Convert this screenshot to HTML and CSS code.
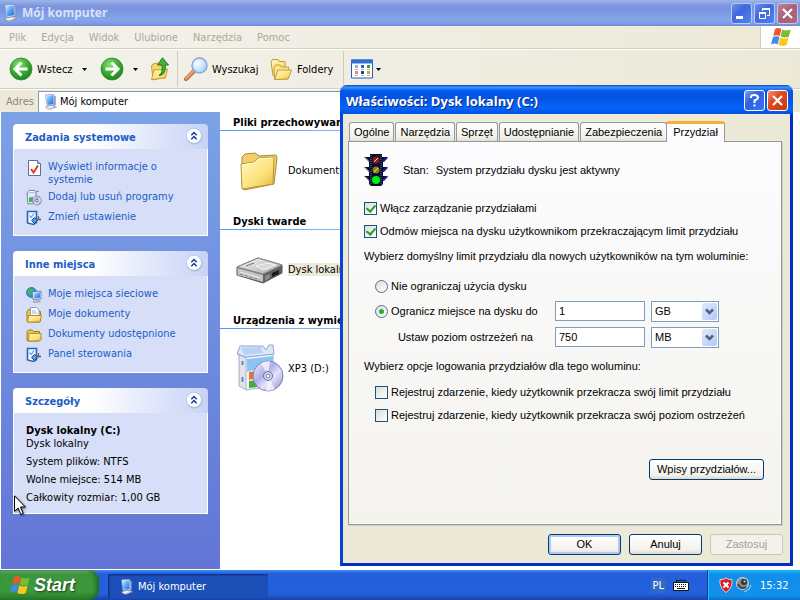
FILE: index.html
```html
<!DOCTYPE html>
<html lang="pl">
<head>
<meta charset="utf-8">
<title>Mój komputer</title>
<link rel="stylesheet" href="styles.css">
</head>
<body>
<svg class="defs" aria-hidden="true">
  <defs>
    <linearGradient id="g-screen" x1="0" y1="0" x2="1" y2="1"><stop offset="0" stop-color="#d4eeff"/><stop offset=".5" stop-color="#5aa6f4"/><stop offset="1" stop-color="#2468d4"/></linearGradient>
    <radialGradient id="g-green" cx=".4" cy=".3" r=".75"><stop offset="0" stop-color="#8ee070"/><stop offset=".5" stop-color="#3fae34"/><stop offset="1" stop-color="#1c7d1c"/></radialGradient>
    <linearGradient id="g-folder" x1="0" y1="0" x2="1" y2="1"><stop offset="0" stop-color="#fffbc0"/><stop offset=".6" stop-color="#fbe27a"/><stop offset="1" stop-color="#e8b93c"/></linearGradient>
    <linearGradient id="g-disc" x1="0" y1="0" x2="1" y2="1"><stop offset="0" stop-color="#f4f4ff"/><stop offset=".4" stop-color="#b0b0ea"/><stop offset=".6" stop-color="#e6e2fc"/><stop offset="1" stop-color="#8c88d0"/></linearGradient>
    <linearGradient id="g-metal" x1="0" y1="0" x2="1" y2="1"><stop offset="0" stop-color="#f8f8f8"/><stop offset="1" stop-color="#a8a8a8"/></linearGradient>
    <radialGradient id="g-lens" cx=".35" cy=".35" r=".7"><stop offset="0" stop-color="#fff"/><stop offset="1" stop-color="#a4d2f8"/></radialGradient>
    <symbol id="computer" viewBox="0 0 16 16">
      <path d="M3 12.500 11 11l2.500 2-7 2.500L3 14z" fill="#d8d6e4" stroke="#8886a8" stroke-width=".6"/>
      <path d="M10.500 1.500 12.500 2.500v8l-1.500 1z" fill="#a8b4d4" stroke="#6d7da6" stroke-width=".5"/>
      <path d="M2.500 1Q6.500 0 10.800.5l.7 10Q8 12 4 11.500z" fill="#e4edfb" stroke="#6d8bc4" stroke-width=".6"/>
      <path d="M3.300 2Q7 .8 10.200 1.500l.5 8.300Q7.500 11 4.500 10.500z" fill="url(#g-screen)"/>
      <path d="M4 13.500l5-1" stroke="#fff"/><path d="M11 13.300h1" stroke="#d44"/>
    </symbol>
    <symbol id="flag" viewBox="0 0 20 20">
      <path d="M4 2Q7 0 10.500 2L8.700 9Q5.500 7.500 2.300 9z" fill="#f0562c"/>
      <path d="M11.300 2.500Q15 4.500 19.700 2.500L17.800 9.800Q13.500 11.300 9.500 9.500z" fill="#7cbc30"/>
      <path d="M2 10Q5.500 8.500 8.500 10L6.600 17.500Q4 15.500 0 17.500z" fill="#3f8be6"/>
      <path d="M9.200 10.500Q13 12.500 17.500 10.800L15.700 18Q12 20 7.400 18z" fill="#fcc820"/>
    </symbol>
    <symbol id="collapse" viewBox="0 0 18 18">
      <circle cx="9.500" cy="9.700" r="8" fill="#98a8cc" opacity=".6"/>
      <circle cx="9" cy="8.700" r="7.500" fill="#fff" stroke="#b4c2e4" stroke-width=".8"/>
      <path d="M6.300 8.200 9 5.500l2.700 2.700M6.300 12.200 9 9.500l2.700 2.700" fill="none" stroke="#123a90" stroke-width="1.500"/>
    </symbol>
    <symbol id="panel" viewBox="0 0 16 16">
      <path d="M1.500 1.500h9v11l-3 2-6-1.500z" fill="#eef6ff" stroke="#2a66b4" stroke-width="1.600"/>
      <path d="M3.500 5.500 5 7.500l3-4" fill="none" stroke="#6b9ade" stroke-width="1.200"/>
      <path d="M5.500 10.500 8.500 7.500l3 2.500-3 3.500z" fill="#5b9ae4" stroke="#1e4c94"/>
      <path d="M11 9.500h4" stroke="#8a5f50" stroke-width="1.800"/>
      <path d="M12.500 6v4" stroke="#47669a" stroke-width="1.200"/>
    </symbol>
    <symbol id="folder" viewBox="0 0 16 16">
      <path d="M1 4.500 2.500 3H6l1.500 1.500h6V13l-1 1h-11L1 13z" fill="#f1c445" stroke="#a8781c"/>
      <path d="M3 6.500h12v6L13.500 14h-11z" fill="url(#g-folder)" stroke="#b98a24"/>
    </symbol>
  </defs>
</svg>

<main class="explorer">
  <header class="titlebar">
    <svg class="icon18"><use href="#computer"/></svg>
    <h1>Mój komputer</h1>
    <div class="winbuttons">
      <button class="winbtn" aria-label="Minimalizuj"><svg viewBox="0 0 19 19"><path d="M4 13.500h7" stroke="#fff" stroke-width="3"/></svg></button>
      <button class="winbtn" aria-label="Przywróć"><svg viewBox="0 0 19 19" fill="none" stroke="#fff"><path d="M7.500 7V5.500h7v6H12"/><path d="M7 5h8" stroke-width="2"/><path d="M4.500 9.500h6v5h-6z"/><path d="M4 9h7" stroke-width="2"/></svg></button>
      <button class="winbtn close" aria-label="Zamknij"><svg viewBox="0 0 19 19"><path d="m5 5 9 9m0-9-9 9" stroke="#fff" stroke-width="2.200"/></svg></button>
    </div>
  </header>

  <nav class="menubar">
    <button>Plik</button><button>Edycja</button><button>Widok</button><button>Ulubione</button><button>Narzędzia</button><button>Pomoc</button>
    <div class="brand"><svg class="icon20"><use href="#flag"/></svg></div>
  </nav>

  <div class="toolbar">
    <button class="tool back"><svg class="icon24" viewBox="0 0 24 24"><circle cx="12" cy="12" r="11" fill="url(#g-green)" stroke="#2c8a2a" stroke-width=".8"/><path d="M12.500 5.500 6 12l6.500 6.500M6.500 12H18.500" fill="none" stroke="#fff" stroke-width="3"/></svg>Wstecz</button>
    <button class="drop" aria-label="Historia wstecz"><svg viewBox="0 0 5 3"><path d="M0 0h5L2.500 3z"/></svg></button>
    <button class="tool forward" aria-label="Dalej"><svg class="icon24" viewBox="0 0 24 24"><circle cx="12" cy="12" r="11" fill="url(#g-green)" stroke="#2c8a2a" stroke-width=".8"/><path d="M11.500 5.500 18 12l-6.500 6.500M17.500 12H5.500" fill="none" stroke="#fff" stroke-width="3"/></svg></button>
    <button class="drop" aria-label="Historia dalej"><svg viewBox="0 0 5 3"><path d="M0 0h5L2.500 3z"/></svg></button>
    <button class="tool up" aria-label="W górę"><svg class="icon24" viewBox="0 0 24 24"><path d="M3.500 9 5 7l5-1 1.500 2 6 .5v11L5 23z" fill="#f7d661" stroke="#c39a3a"/><path d="M3.500 22.500 6 13l13.500-1-2 9z" fill="url(#g-folder)" stroke="#c39a3a"/><path d="M11 18.500q4-2 3-10.500H9.500L14.500.8 20.500 8H17q1.500 10-6 10.500z" fill="#41b23a" stroke="#1c7a1c"/></svg></button>
    <span class="sep"></span>
    <button class="tool search"><svg class="icon24" viewBox="0 0 24 24"><path d="M2 22l9-9" stroke="#a8654c" stroke-width="4" stroke-linecap="round"/><path d="M2 21.500l8-8" stroke="#f59a60" stroke-width="2.500" stroke-linecap="round"/><circle cx="15.500" cy="8.500" r="7.500" fill="url(#g-lens)" stroke="#8aa6d8" stroke-width="1.500"/></svg>Wyszukaj</button>
    <button class="tool folders"><svg class="icon24" viewBox="0 0 24 24"><path d="M2 5l1.500-2.500H9l1 2h6v13L4 18.500z" fill="url(#g-folder)" stroke="#c19a3c"/><path d="M5 10.500 6.500 8H11l1.500 2h7V21l-1 1H5.500z" fill="#fae68c" stroke="#c19a3c"/><path d="M5.500 22.500 9 13h13.500L19 22z" fill="url(#g-folder)" stroke="#c19a3c"/></svg>Foldery</button>
    <span class="sep"></span>
    <button class="tool views" aria-label="Widoki"><svg class="icon24" viewBox="0 0 24 24"><path d="M1.500 3h21v18h-21z" fill="#fff" stroke="#2a5cb8"/><path d="M1 4.500h22" stroke="#2f6fd6" stroke-width="4"/><g stroke-width="3"><path d="M5 9.500h3" stroke="#8eb0e4"/><path d="M11 9.500h3" stroke="#2b5fd0"/><path d="M17 9.500h3" stroke="#2e9a38"/><path d="M5 15.500h3" stroke="#ee8664"/><path d="M11 15.500h3" stroke="#203c90"/><path d="M17 15.500h3" stroke="#d8a428"/></g><path d="M5 12.500h3m3 0h3m3 0h3M5 18.500h3m3 0h3m3 0h3" stroke="#a8b4c8"/></svg></button>
    <button class="drop" aria-label="Wybierz widok"><svg viewBox="0 0 5 3"><path d="M0 0h5L2.500 3z"/></svg></button>
  </div>

  <div class="addressbar">
    <label for="address">Adres</label>
    <div class="field"><svg class="icon16"><use href="#computer"/></svg><input id="address" type="text" value="Mój komputer"></div>
  </div>

  <div class="content">
    <aside class="sidebar">
      <section class="card">
        <header><h2>Zadania systemowe</h2><button aria-label="Zwiń"><svg><use href="#collapse"/></svg></button></header>
        <ul>
          <li><svg class="icon16" viewBox="0 0 16 16"><path d="M2.500.5h9l3 3v12h-12z" fill="#fff" stroke="#55719e"/><path d="M11.500.5v3h3" fill="#c8dcf6" stroke="#55719e"/><path d="M5 9l2.500 3.500L12 5.500" fill="none" stroke="#e83a20" stroke-width="2"/></svg><a href="#">Wyświetl informacje o systemie</a></li>
          <li><svg class="icon16" viewBox="0 0 16 16"><path d="M1 3l9-1.500v12L2 14z" fill="#dfeaf8" stroke="#7089b4"/><path d="M1 3 3 .5h6l1 1.500 3-1" fill="#fff" stroke="#7089b4"/><path d="M3 7.500 7 7v5H3z" fill="#4eb04c"/><circle cx="11" cy="10.500" r="4.500" fill="url(#g-disc)" stroke="#7a7a9c" stroke-width=".7"/><circle cx="11" cy="10.500" r="1.300" fill="#fff" stroke="#667"/></svg><a href="#">Dodaj lub usuń programy</a></li>
          <li><svg class="icon16"><use href="#panel"/></svg><a href="#">Zmień ustawienie</a></li>
        </ul>
      </section>
      <section class="card">
        <header><h2>Inne miejsca</h2><button aria-label="Zwiń"><svg><use href="#collapse"/></svg></button></header>
        <ul>
          <li><svg class="icon16" viewBox="0 0 16 16"><circle cx="5.500" cy="5.500" r="5" fill="#3b8de2" stroke="#1f5fb0" stroke-width=".7"/><path d="M2 3q3-3 5 0T3 8q-2-2-1-5z" fill="#4cb848"/><path d="M6 5l9-1v8l-8 .5z" fill="#dfe9f8" stroke="#54709e" stroke-width=".8"/><path d="M7.500 6 14 5.300v5.500l-6 .5z" fill="url(#g-screen)"/><path d="M7 14.500l6-1 1.500 1-5 1.500z" fill="#ccc9d8" stroke="#777" stroke-width=".5"/></svg><a href="#">Moje miejsca sieciowe</a></li>
          <li><svg class="icon16" viewBox="0 0 16 16"><path d="M1 4.500 2.500 2.500H6l8.500 2V14l-1 1h-12L1 14z" fill="#f1c445" stroke="#a8781c"/><path d="M4.500.5h6l2.500 2.500v9h-8.500z" fill="#fff" stroke="#8ca0c4"/><path d="M6 4h4m-4 2h5" stroke="#8bb0e8"/><path d="M2.500 8.500h13L14 15H1.500z" fill="url(#g-folder)" stroke="#b98a24"/></svg><a href="#">Moje dokumenty</a></li>
          <li><svg class="icon16"><use href="#folder"/></svg><a href="#">Dokumenty udostępnione</a></li>
          <li><svg class="icon16"><use href="#panel"/></svg><a href="#">Panel sterowania</a></li>
        </ul>
      </section>
      <section class="card">
        <header><h2>Szczegóły</h2><button aria-label="Zwiń"><svg><use href="#collapse"/></svg></button></header>
        <div class="details">
          <strong>Dysk lokalny (C:)</strong>
          <p>Dysk lokalny</p>
          <p>System plików: NTFS</p>
          <p>Wolne miejsce: 514 MB</p>
          <p>Całkowity rozmiar: 1,00 GB</p>
        </div>
      </section>
    </aside>

    <div class="files">
      <section>
        <h3>Pliki przechowywane</h3>
        <div class="file"><svg class="icon48" viewBox="0 0 48 48"><path d="M6 40V11l3-3 10-1 4 3 17-1 1 3-3 26-30 6z" fill="#f3d066" stroke="#a88a3c"/><path d="M5 18l13-2 4-4 16-1-1 27-31 5z" fill="url(#g-folder)" stroke="#b8983c"/><path d="M6.500 19 18.500 17l4-4 14-1" fill="none" stroke="#fffde0"/></svg><span>Dokumenty</span></div>
      </section>
      <section>
        <h3>Dyski twarde</h3>
        <div class="file selected"><svg class="icon48" viewBox="0 0 48 48"><path d="M1 22 22 13l24 7v8L27 38 1 30z" fill="#606060" stroke="#555"/><path d="M1 22 22 13l24 7-19 9z" fill="url(#g-metal)" stroke="#888"/><path d="M1.500 23 27 30v7L1.500 30z" fill="#c4c4c4"/><path d="M4 27l20 6" stroke="#eee"/><path d="M4 29l20 6" stroke="#808080" stroke-dasharray="3 2"/><path d="M20 21l12-3 8 2-13 5z" fill="#d8d8d8" stroke="#f6f6f6"/><path d="M36 28l7-3v4l-7 3z" fill="#1c1c1c"/><path d="M29 31l5-2v4l-5 3z" fill="#8c8c8c"/><path d="M10 21l8-3" stroke="#777"/></svg><span>Dysk lokalny</span></div>
      </section>
      <section>
        <h3>Urządzenia z wymiennym</h3>
        <div class="file"><svg class="icon48" viewBox="0 0 48 48"><path d="M3 11l8 3v32l-8-4z" fill="#e2e4ea" stroke="#a4acbc"/><path d="M10 13l27-3v32L10 46z" fill="#f0f7ff" stroke="#a4b6d2"/><path d="M1 10 4 2h23l3 4 3-5h4l1 9-28 3z" fill="#dbe8fa" stroke="#8ca8d6"/><path d="M5 4l20-1 2 6-19 2z" fill="#b9d2f4"/><path d="M11 15l26-3v8l-26 8z" fill="#8cc4f5"/><path d="M13 28l8-1v7l-8 2z" fill="#f07030"/><path d="M22 27l8-1v7l-8 1z" fill="#63b847"/><path d="M13 37l8-1v7l-8 1z" fill="#3fae34"/><path d="M6.500 17v4m0 12v5" stroke="#5b87cc" stroke-width="2"/><circle cx="32" cy="32" r="15" fill="url(#g-disc)" stroke="#7f7fb4"/><path d="M32 32 25 19a15 15 0 0 1 9-2zM32 32l7 13a15 15 0 0 1-9 2z" fill="#fff" opacity=".65"/><circle cx="32" cy="32" r="4.500" fill="#d8d8ee" stroke="#6668b0"/><circle cx="32" cy="32" r="2" fill="#fff" stroke="#7880a0"/></svg><span>XP3 (D:)</span></div>
      </section>
    </div>
  </div>
</main>

<footer class="taskbar">
  <button class="start"><svg class="icon20"><use href="#flag"/></svg>Start</button>
  <button class="task"><svg class="icon16"><use href="#computer"/></svg>Mój komputer</button>
  <div class="lang"><span>PL</span><svg class="icon16" viewBox="0 0 16 16"><path d="M3.500 5V3l2 1 2-1 2 1 2-1 2 1" fill="none" stroke="#111"/><path d="M.5 5.500h15v8H.5z" fill="#fff" stroke="#111"/><path d="M2 7.500h12M2 9.500h12" stroke="#111" stroke-dasharray="1 1"/><path d="M4 11.500h8" stroke="#111"/></svg></div>
  <div class="tray">
    <svg class="icon16" viewBox="0 0 16 16"><path d="M8 1q3 2 6 1.500 1 8-6 13Q1 10.500 2 2.500 5 3 8 1z" fill="#d81e24" stroke="#f4c4c4"/><path d="M5.500 5.500l5 5m0-5-5 5" stroke="#fff" stroke-width="2"/></svg>
    <svg class="icon16" viewBox="0 0 16 16"><circle cx="6.500" cy="6.500" r="6" fill="#8c8c90" stroke="#dcdce4"/><path d="M2 7a5 5 0 0 0 8 3" fill="none" stroke="#444" stroke-width="2"/><circle cx="8" cy="5" r="3" fill="#333"/><circle cx="8.500" cy="4.500" r="1" fill="#ddd"/><path d="M10 14q4-1 5-6M8 15l2-1" fill="none" stroke="#b0d8ff"/></svg>
    <time>15:32</time>
  </div>
</footer>

<div class="dialog" role="dialog" aria-labelledby="dialog-title">
  <header class="dialog-title">
    <h2 id="dialog-title">Właściwości: Dysk lokalny (C:)</h2>
    <button class="winbtn" aria-label="Pomoc"><svg viewBox="0 0 19 19"><path d="M6 7V5.500Q6.500 4 9.500 4q3.500 0 3.500 2.500Q13 8 9.500 9.500V12" fill="none" stroke="#fff" stroke-width="2"/><path d="M8.500 14.500h2" stroke="#fff" stroke-width="2"/></svg></button>
    <button class="winbtn close" aria-label="Zamknij"><svg viewBox="0 0 19 19"><path d="m5 5 9 9m0-9-9 9" stroke="#fff" stroke-width="2.200"/></svg></button>
  </header>
  <form class="dialog-body" onsubmit="return false">
    <div class="tabs" role="tablist">
      <button role="tab">Ogólne</button><button role="tab">Narzędzia</button><button role="tab">Sprzęt</button><button role="tab">Udostępnianie</button><button role="tab">Zabezpieczenia</button><button role="tab" class="active" aria-selected="true">Przydział</button>
    </div>
    <div class="pane">
      <div class="status">
        <svg class="traffic" viewBox="0 0 24 32"><path d="M0 3h6V0h12v3h6l-5 5v5h5l-5 5v4h5l-5 5v3l-2 2H7l-2-2v-3l-5-5h5v-4l-5-5h5V8z" fill="#0a0a30"/><path d="M1 3.500l4 4M1 13.500l4 4M1 22.500l4 4" stroke="#e8e060"/><path d="M23 3.500l-4 4m4 6-4 4m4 5-4 4" stroke="#22228c" stroke-width="2"/><path d="M7 1v30M17 1v30" stroke="#2a8c8c" stroke-dasharray="1 1"/><circle cx="12" cy="6" r="3.500" fill="#901818"/><circle cx="12" cy="16" r="3.500" fill="#8c8410"/><path d="m10 8 4-4m-4 14 4-4" stroke="#e8d8c0"/><circle cx="12" cy="26" r="4" fill="#00f010"/></svg>
        <span>Stan:</span><span>System przydziału dysku jest aktywny</span>
      </div>
      <div class="group">
        <label class="check"><input type="checkbox" checked>Włącz zarządzanie przydziałami</label>
        <label class="check"><input type="checkbox" checked>Odmów miejsca na dysku użytkownikom przekraczającym limit przydziału</label>
      </div>
      <p class="note">Wybierz domyślny limit przydziału dla nowych użytkowników na tym woluminie:</p>
      <div class="limits">
        <label class="check wide"><input type="radio" name="limit">Nie ograniczaj użycia dysku</label>
        <label class="check"><input type="radio" name="limit" checked>Ogranicz miejsce na dysku do</label>
        <input type="text" value="1" aria-label="Limit miejsca">
        <div class="combo"><select aria-label="Jednostka limitu"><option>GB</option></select><svg viewBox="0 0 15 17"><path d="m4 6.500 3.500 3.500L11 6.500" fill="none" stroke="#4d6185" stroke-width="2.500"/></svg></div>
        <label class="right" for="warn">Ustaw poziom ostrzeżeń na</label>
        <input id="warn" type="text" value="750">
        <div class="combo"><select aria-label="Jednostka ostrzeżenia"><option>MB</option></select><svg viewBox="0 0 15 17"><path d="m4 6.500 3.500 3.500L11 6.500" fill="none" stroke="#4d6185" stroke-width="2.500"/></svg></div>
      </div>
      <p class="note">Wybierz opcje logowania przydziałów dla tego woluminu:</p>
      <div class="group indent">
        <label class="check"><input type="checkbox">Rejestruj zdarzenie, kiedy użytkownik przekracza swój limit przydziału</label>
        <label class="check"><input type="checkbox">Rejestruj zdarzenie, kiedy użytkownik przekracza swój poziom ostrzeżeń</label>
      </div>
      <button class="push entries">Wpisy przydziałów...</button>
    </div>
    <div class="actions">
      <button class="push default">OK</button>
      <button class="push">Anuluj</button>
      <button class="push" disabled>Zastosuj</button>
    </div>
  </form>
</div>

<svg class="cursor" viewBox="0 0 13 21" aria-hidden="true"><path d="M.5.800v15.500l3.600-3.300 2.700 6.500 2.400-1L6.500 12h4.800z" fill="#fff" stroke="#000"/></svg>
</body>
</html>
```
FILE: styles.css
```css
* { box-sizing: border-box; }

body {
  margin: 0;
  min-height: 100vh;
  display: flex;
  flex-direction: column;
  overflow: hidden;
  position: relative;
  font: 11px/13px "DejaVu Sans Condensed", "DejaVu Sans", sans-serif;
  color: #000;
  background: #fff;
}

h1, h2, h3, p, ul { margin: 0; padding: 0; }
button, input, select { font: inherit; color: inherit; margin: 0; }
button { border: 0; padding: 0; background: none; }
svg { display: block; flex: none; }
.defs { position: absolute; width: 0; height: 0; }

.icon16 { width: 16px; height: 16px; }
.icon18 { width: 18px; height: 18px; }
.icon20 { width: 20px; height: 20px; }
.icon24 { width: 24px; height: 24px; }
.icon48 { width: 48px; height: 48px; }

/* Explorer window */
.explorer { flex: 1; display: flex; flex-direction: column; background: #ece9d8; }

.titlebar {
  height: 26px;
  display: flex;
  align-items: center;
  gap: 2px;
  padding: 0 2px;
  background: linear-gradient(#9db5ea 0, #7a93de 25%, #7c97e2 45%, #83a7e9 75%, #7f9be4 90%, #7288d6 100%);
}
.titlebar h1 { font: bold 12px/16px "Open Sans", sans-serif; color: #d8e4f8; }
.winbuttons { margin-left: auto; display: flex; gap: 2px; }
.winbtn {
  width: 21px;
  height: 21px;
  border: 1px solid #fff;
  border-radius: 3px;
  background: linear-gradient(135deg, #7f9ff4, #2f60e0 40%, #3c74ee);
}
.winbtn.close { background: linear-gradient(135deg, #f0967c, #e04820 40%, #c83a12); }
.titlebar .winbtn { border-color: #bccaf2; background: linear-gradient(135deg, #6f8fe8, #4068dc 40%, #4e86f0); }
.titlebar .winbtn.close { background: linear-gradient(135deg, #c08498, #ac5c78 50%, #b4687c); }

.menubar {
  height: 23px;
  display: flex;
  align-items: center;
  gap: 15px;
  padding-left: 9px;
  color: #aca899;
  background: linear-gradient(90deg, #f3f2ec, #ece9d8);
  border-bottom: 1px solid #d5cfb8;
}
.brand {
  align-self: stretch;
  width: 40px;
  margin-left: auto;
  display: grid;
  place-items: center;
  background: #fff;
  border-left: 1px solid #d5cfb8;
}

.toolbar {
  height: 40px;
  display: flex;
  align-items: center;
  padding-left: 9px;
  background: linear-gradient(90deg, #f3f2ec, #ece9d8);
  border-top: 1px solid #fff;
  border-bottom: 1px solid #d5cfb8;
}
.tool { display: flex; align-items: center; gap: 4px; }
.drop { width: 6px; }
.drop svg { width: 5px; height: 3px; }
.back { width: 73px; }
.forward { margin-left: 12px; width: 33px; }
.up { margin-left: 9px; width: 29px; }
.search { margin-left: 6px; width: 85px; }
.folders { width: 74px; }
.views { margin-left: 6px; width: 26px; }
.sep { width: 1px; height: 36px; background: #d0ccba; }

.addressbar {
  height: 23px;
  display: flex;
  align-items: center;
  padding: 1px 7px 0 6px;
  gap: 4px;
  color: #8c8a7c;
  border-top: 1px solid #fff;
}
.field {
  flex: 1;
  height: 22px;
  display: flex;
  align-items: center;
  padding-left: 4px;
  gap: 1px;
  background: #fff;
  border: 1px solid #7f9db9;
  color: #000;
}
.field input { flex: 1; border: 0; padding: 0; background: none; outline: 0; }

.content { flex: 1; display: flex; background: #fff; padding: 0 0 1px 1px; }

.sidebar {
  width: 219px;
  padding: 12px;
  display: flex;
  flex-direction: column;
  gap: 15px;
  background: linear-gradient(#7ba2e7, #6375d6);
}
.card header {
  height: 25px;
  display: flex;
  align-items: center;
  justify-content: space-between;
  padding: 0 5px 2px 12px;
  border-radius: 4px 4px 0 0;
  background: linear-gradient(90deg, #fff 40%, #c6d3f7);
}
.card h2 { padding-top: 4px; font: bold 11px/13px "DejaVu Sans Condensed", "DejaVu Sans", sans-serif; color: #215dc6; }
.card header svg { width: 18px; height: 18px; }
.card ul, .details { border: 1px solid #fff; border-top: 0; background: #d6dff7; }
.card ul {
  list-style: none;
  padding: 11px 30px 9px 12px;
  display: flex;
  flex-direction: column;
  gap: 4px;
}
.card li { display: flex; gap: 6px; min-height: 16px; }
.card a { color: #215dc6; text-decoration: none; }
.details { padding: 11px 12px 9px; display: flex; flex-direction: column; gap: 5px; }
.details strong { margin-bottom: -5px; }

.files { flex: 1; min-width: 0; }
.files h3 {
  height: 19px;
  padding: 4px 0 0 13px;
  font: bold 11px/13px "DejaVu Sans Condensed", "DejaVu Sans", sans-serif;
  white-space: nowrap;
  background: linear-gradient(90deg, #4a9aff, #fff 400px) bottom / 100% 1px no-repeat;
}
.file { height: 80px; display: flex; align-items: center; gap: 4px; padding: 0 0 2px 16px; white-space: nowrap; }
.selected span { background: #ece9d8; }

/* Taskbar */
.taskbar {
  height: 30px;
  display: flex;
  align-items: stretch;
  color: #fff;
  background: linear-gradient(#3f8cf3 0, #245edb 12%, #2460dc 80%, #1941a5 100%);
}
.start {
  width: 99px;
  display: flex;
  align-items: center;
  gap: 4px;
  padding-left: 10px;
  border-radius: 0 10px 10px 0;
  background: linear-gradient(#76b976 0, #3c963c 15%, #3a9a3a 70%, #2c7a2c 100%);
  box-shadow: inset -3px 0 4px #1e6a22;
  font: italic bold 18px/24px "Liberation Sans", Arial, sans-serif;
  text-shadow: 1px 1px 2px #1a3a1a;
}
.task {
  width: 160px;
  height: 25px;
  margin: 4px 0 0 9px;
  display: flex;
  align-items: center;
  gap: 3px;
  padding-left: 11px;
  border-radius: 2px;
  background: #1c4fb8;
  box-shadow: inset 1px 1px 2px #0c2c78;
}
.lang { margin-left: auto; display: flex; align-items: center; gap: 7px; padding-right: 19px; }
.lang span { padding: 1px 2px; background: #316ac5; }
.tray {
  width: 92px;
  display: flex;
  align-items: center;
  padding-left: 9px;
  gap: 2px;
  background: linear-gradient(#18b9f4 0, #0f8eea 15%, #1290ea 85%, #0c70c8 100%);
  border-left: 1px solid #18c4ff;
  box-shadow: -1px 0 0 #0c3b9c;
}
.tray time { margin-left: 6px; }

/* Properties dialog */
.dialog {
  position: absolute;
  left: 340px;
  top: 85px;
  width: 453px;
  border: 3px solid #0842d8;
  border-top: 0;
  border-right-color: #0030c4;
  border-bottom-color: #0030c4;
  border-radius: 8px 8px 0 0;
  background: #ece9d8;
  font: 11px/13px "Liberation Sans", Arial, sans-serif;
}
.dialog-title {
  height: 29px;
  margin: 0 -3px;
  display: flex;
  align-items: center;
  gap: 2px;
  padding: 2px 5px 0 6px;
  border-radius: 7px 7px 0 0;
  background: linear-gradient(#0a48c8 0, #3c94ff 8%, #0458ea 20%, #0453e2 45%, #0664fc 80%, #0250d8 100%);
}
.dialog-title h2 { flex: 1; font: bold 13px/16px "Open Sans", sans-serif; color: #fff; text-shadow: 1px 1px 0 #0a2a80; }

.dialog-body { padding: 7px 8px 8px 5px; }
.tabs { display: flex; align-items: flex-end; padding-left: 1px; gap: 1px; }
.tabs button {
  height: 19px;
  padding: 0 4px;
  white-space: nowrap;
  border: 1px solid #919b9c;
  border-bottom: 0;
  border-radius: 3px 3px 0 0;
  background: linear-gradient(#fff, #f0efe8 80%, #e4e2d4);
}
.tabs .active {
  height: 21px;
  padding: 0 6px 2px;
  margin: 0 0 -1px -2px;
  border-top: 3px solid #f8b030;
  background: #fcfcfe;
  position: relative;
}
.pane {
  display: flex;
  flex-direction: column;
  padding: 12px 17px 44px 15px;
  border: 1px solid #919b9c;
  background: linear-gradient(#fcfcfe, #f4f3ee);
  box-shadow: inset -1px -1px 0 #fff, 1px 1px 0 #d0cebf;
}
.status { display: flex; align-items: center; gap: 7px; }
.status span:first-of-type { margin-left: 8px; }
.traffic { width: 24px; height: 32px; }
.group { margin-top: 11px; }
.check { display: flex; align-items: center; gap: 3px; height: 23px; white-space: nowrap; }
.note { line-height: 26px; }
.limits {
  display: grid;
  grid-template-columns: 174px 90px 68px;
  grid-template-rows: 23px 26px 26px;
  align-items: center;
  column-gap: 6px;
  margin: 6px 0 3px 11px;
}
.wide { grid-column: 1 / -1; }
.right { justify-self: end; margin-right: 16px; }
.indent { margin: 2px 0 0 11px; }

input[type="checkbox"], input[type="radio"] {
  appearance: none;
  width: 13px;
  height: 13px;
  border: 1px solid #1c5180;
  background: linear-gradient(135deg, #dcdcd7, #fff);
  display: grid;
  place-items: center;
}
input[type="radio"] { border-radius: 50%; border-color: #4a7099; }
input[type="checkbox"]:checked::after {
  content: "";
  width: 4px;
  height: 7px;
  margin-bottom: 2px;
  border: solid #21a121;
  border-width: 0 2px 2px 0;
  transform: rotate(40deg);
}
input[type="radio"]:checked::after { content: ""; width: 5px; height: 5px; border-radius: 50%; background: #2fae2f; }

.limits input[type="text"], .combo select {
  width: 100%;
  height: 20px;
  padding: 0 3px;
  border: 1px solid #7f9db9;
  border-radius: 0;
  background: #fff;
}
.combo { position: relative; }
.combo select { appearance: none; display: block; height: 21px; }
.combo svg {
  position: absolute;
  right: 2px;
  top: 2px;
  width: 15px;
  height: 17px;
  border-radius: 2px;
  background: linear-gradient(135deg, #e0e9fe, #b4c8f8);
  pointer-events: none;
}

.push {
  width: 73px;
  height: 21px;
  border: 1px solid #003c74;
  border-radius: 3px;
  background: linear-gradient(#fff, #f2f1ea 80%, #dcd8cc);
}
.push.default { box-shadow: inset 0 0 0 2px #b0c8f4; }
.push:disabled { color: #a1a192; border-color: #c9c7ba; background: #f3f2ea; }
.entries { width: 115px; margin-top: 32px; align-self: flex-end; }
.actions { display: flex; justify-content: flex-end; gap: 8px; padding-top: 9px; margin-right: -1px; }

.cursor { position: absolute; left: 14px; top: 495px; width: 13px; height: 21px; filter: drop-shadow(1px 1px 1px rgb(0 0 0 / 50%)); }
```
